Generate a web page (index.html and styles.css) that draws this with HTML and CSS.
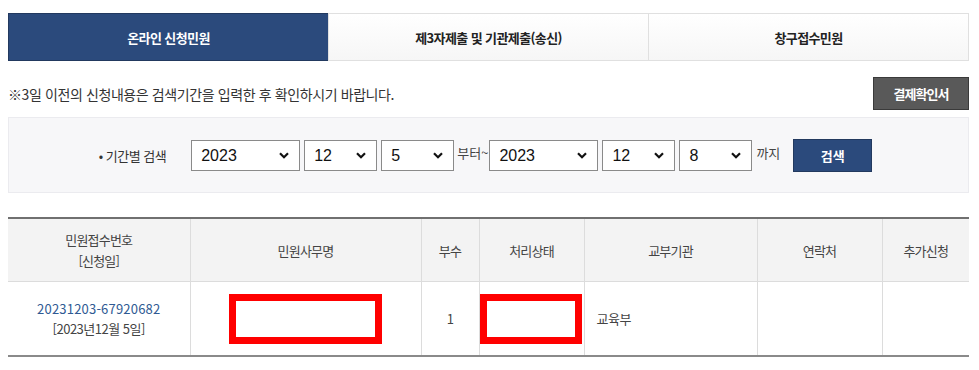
FILE: index.html
```html
<!DOCTYPE html>
<html lang="ko">
<head>
  <meta charset="UTF-8">
  <title>민원신청조회</title>
  <link rel="stylesheet" href="styles.css">
</head>
<body>
  <div class="wrap">
    <ul class="tabs">
      <li class="tab active">온라인 신청민원</li>
      <li class="tab">제3자제출 및 기관제출(송신)</li>
      <li class="tab">창구접수민원</li>
    </ul>

    <div class="notice-row">
      <p class="notice">※3일 이전의 신청내용은 검색기간을 입력한 후 확인하시기 바랍니다.</p>
      <button class="btn-gray">결제확인서</button>
    </div>

    <div class="search-box">
      <span class="label">• 기간별 검색</span>
      <select class="sel-year"><option>2023</option></select>
      <select class="sel-md"><option>12</option></select>
      <select class="sel-md"><option>5</option></select>
      <span class="txt txt-from">부터~</span>
      <select class="sel-year"><option>2023</option></select>
      <select class="sel-md"><option>12</option></select>
      <select class="sel-md"><option>8</option></select>
      <span class="txt txt-to">까지</span>
      <button class="btn-blue">검색</button>
    </div>

    <table class="list">
      <colgroup>
        <col style="width:182px">
        <col style="width:231px">
        <col style="width:58px">
        <col style="width:105px">
        <col style="width:173px">
        <col style="width:125px">
        <col style="width:87px">
      </colgroup>
      <thead>
        <tr>
          <th>민원접수번호<br>[신청일]</th>
          <th>민원사무명</th>
          <th>부수</th>
          <th>처리상태</th>
          <th>교부기관</th>
          <th>연락처</th>
          <th>추가신청</th>
        </tr>
      </thead>
      <tbody>
        <tr>
          <td><a class="num" href="#">20231203-67920682</a><br>[2023년12월 5일]</td>
          <td><span class="mask mask-wide"></span></td>
          <td>1</td>
          <td><span class="mask mask-small"></span></td>
          <td class="left">교육부</td>
          <td></td>
          <td></td>
        </tr>
      </tbody>
    </table>
  </div>
</body>
</html>
```

FILE: styles.css
```css
body { margin: 0; background: #fff; font-family: "Noto Sans CJK KR", "Noto Sans", sans-serif; color: #333; }
.wrap { width: 961px; margin: 0; padding: 13px 0 0 8px; }

.tabs { display: flex; list-style: none; margin: 0; padding: 0; height: 48px; }
.tab { flex: 1; display: flex; align-items: center; justify-content: center; border: 1px solid #e0e0e0; margin-left: -1px; background: linear-gradient(#fff, #f6f6f6); font-size: 13px; font-weight: bold; letter-spacing: -0.6px; color: #222; }
.tab:first-child { margin-left: 0; }
.tab.active { background: #2b4a7c; border-color: #22395f; color: #fff; }

.notice-row { display: flex; justify-content: space-between; align-items: center; margin-top: 16px; height: 33px; }
.notice { margin: 0; font-size: 14px; letter-spacing: -0.4px; color: #333; }
.btn-gray { width: 96px; height: 33px; background: #595959; border: 1px solid #3a3a3a; color: #fff; font-family: inherit; font-size: 13px; font-weight: bold; letter-spacing: -1px; padding: 0; }

.search-box { display: flex; align-items: center; justify-content: center; margin-top: 7px; height: 74px; background: #f7f7f9; border: 1px solid #ebebef; padding-right: 6px; }
.label { font-size: 13px; letter-spacing: -0.5px; color: #333; margin-right: 25px; }
.search-box select { appearance: none; -webkit-appearance: none; height: 31px; font-family: "Liberation Sans", Arial, sans-serif; font-size: 16px; color: #111; border: 1px solid #8a8a8a; border-radius: 0; padding: 0 4px 0 9px; margin-right: 4px;
  background: #fff url("data:image/svg+xml;utf8,<svg xmlns='http://www.w3.org/2000/svg' width='10' height='7' viewBox='0 0 10 7'><path d='M1 1.2 L5 5.2 L9 1.2' fill='none' stroke='%23111' stroke-width='2.2'/></svg>") no-repeat right 10px center; }
.sel-year { width: 109px; }
.sel-md { width: 73px; }
.txt { font-size: 13px; color: #444; margin-bottom: 6px; }
.txt-from { margin-right: 1px; margin-left: -1px; }
.txt-to { margin-left: 0; margin-right: 13px; }
.btn-blue { width: 79px; height: 33px; background: #2b4a7c; border: 1px solid #22395f; color: #fff; font-family: inherit; font-size: 13px; font-weight: bold; padding: 0; }

.list { width: 961px; border-collapse: collapse; table-layout: fixed; margin-top: 24px; border-top: 2px solid #707070; border-bottom: 2px solid #8a8a8a; }
.list th { height: 62px; background: #f3f3f3; font-size: 13px; font-weight: normal; letter-spacing: -0.8px; color: #444; line-height: 21px; border: 1px solid #dcdcdc; border-top: none; padding: 0; }
.list td { height: 73px; font-size: 13px; color: #444; text-align: center; line-height: 20px; border-left: 1px solid #dcdcdc; border-right: 1px solid #dcdcdc; padding: 0; letter-spacing: -0.5px; }
.list th:first-child, .list td:first-child { border-left: none; }
.list th:last-child, .list td:last-child { border-right: none; }
.list td.left { text-align: left; padding-left: 12px; }
.num { color: #2f5a93; text-decoration: none; letter-spacing: 0.2px; }
.mask { display: inline-block; box-sizing: border-box; border: 7px solid #ff0000; vertical-align: middle; }
.mask-wide { width: 153px; height: 50px; }
.mask-small { width: 102px; height: 50px; margin-right: 3px; }
```
